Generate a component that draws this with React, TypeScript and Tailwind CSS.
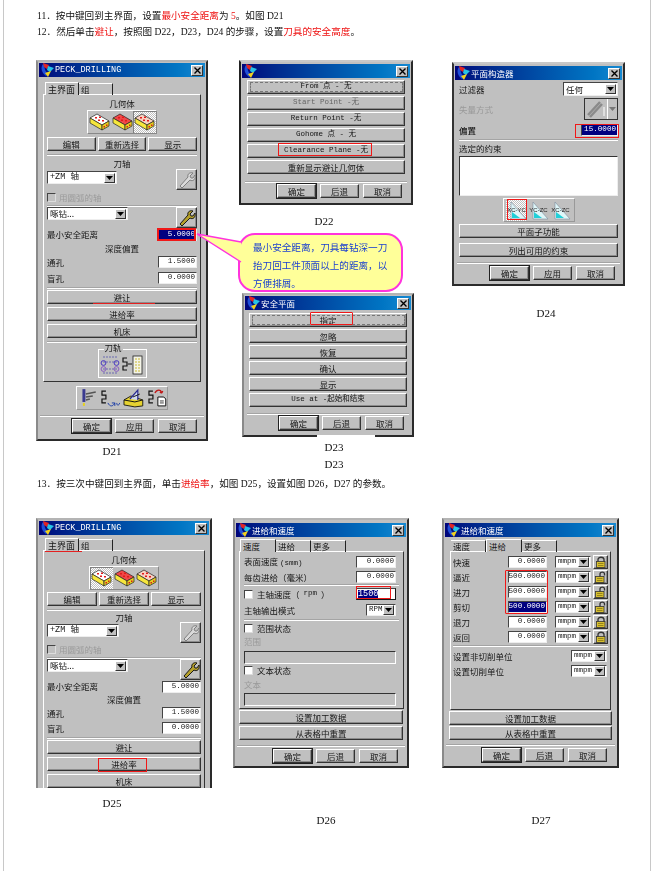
import React from 'react';

type P = { children?: React.ReactNode; className?: string };

const Logo = () => (
  <svg width="14" height="14" viewBox="0 0 14 14" className="shrink-0">
    <path d="M3 1C0 5 2 10 6 13L9 11C5 9 4 5 5 2Z" fill="#1f4fd8" />
    <path d="M3 0L9 2L7 6L4 4Z" fill="#e02424" />
    <path d="M8 3L14 5L10 9L7 7Z" fill="#28c4e8" />
    <path d="M5 10L11 8L8 14Z" fill="#f2d21e" />
  </svg>
);

const Title = ({ children, className = '' }: P) => (
  <div className={`flex h-[14px] items-center bg-linear-to-r from-[#00047c] to-[#1689d2] pl-[1px] pr-[2px] ${className}`}>
    <Logo />
    <span className="ml-[1px] flex-1 whitespace-nowrap text-[8.5px] leading-none text-white">{children}</span>
    <span className="flex h-[11px] w-[12px] items-center justify-center border border-t-white border-l-white border-r-[#333] border-b-[#333] bg-[#c0c0c0]">
      <svg width="7" height="7" viewBox="0 0 7 7"><path d="M0.5 0.5L6.5 6.5M6.5 0.5L0.5 6.5" stroke="#000" strokeWidth="1.4" /></svg>
    </span>
  </div>
);

const Btn = ({ children, className = '' }: P) => (
  <div className={`flex items-center justify-center whitespace-nowrap border border-t-white border-l-white border-r-[#333] border-b-[#333] bg-[#c0c0c0] leading-none shadow-[inset_-1px_-1px_0_#8c8c8c] ${className}`}>
    {children}
  </div>
);

const Sep = ({ className = '' }: P) => <div className={`h-[2px] border-t border-[#a4a4a4] bg-white ${className}`} />;

const Arrow = () => (
  <span className="ml-auto flex h-[10px] w-[11px] shrink-0 items-center justify-center border border-t-white border-l-white border-r-[#333] border-b-[#333] bg-[#c0c0c0]">
    <svg width="7" height="4" viewBox="0 0 7 4"><path d="M0 0H7L3.5 4Z" fill="#000" /></svg>
  </span>
);

const Select = ({ children, className = '' }: P) => (
  <div className={`flex items-center whitespace-nowrap border border-t-[#444] border-l-[#444] border-r-[#eee] border-b-[#eee] bg-white pl-[2px] pr-[1px] leading-none ${className}`}>
    <span>{children}</span>
    <Arrow />
  </div>
);

const Input = ({ children, className = '', sel }: P & { sel?: boolean }) => (
  <div className={`flex items-center justify-end border border-t-[#444] border-l-[#444] border-r-[#eee] border-b-[#eee] pr-[1px] font-['Liberation_Mono',monospace] text-[7.6px] leading-none ${sel ? 'bg-[#000080] text-white' : 'bg-white text-[#222]'} ${className}`}>
    {children}
  </div>
);

const Check = ({ className = '' }: P) => (
  <span className={`inline-block h-[9px] w-[9px] shrink-0 border border-t-[#444] border-l-[#444] border-r-[#ddd] border-b-[#ddd] ${className}`} />
);

const Tab = ({ children, active, className = '' }: P & { active?: boolean }) => (
  <div className={`flex h-[12px] items-center pl-[2px] leading-none ${active ? 'z-10 h-[13px] border border-b-0 border-t-white border-l-white border-r-[#222] bg-[#c0c0c0]' : 'mt-[1px] border-t border-r border-t-white border-r-[#222]'} ${className}`}>
    {children}
  </div>
);

const Mark = ({ className = '' }: P) => <div className={`pointer-events-none absolute z-20 border border-[#f01818] ${className}`} />;

const Frame = ({ children, className = '' }: P) => (
  <div className={`relative shrink-0 border-2 border-t-[#b4b4b4] border-l-[#8a8a8a] border-r-[#2a2a2a] border-b-[#2a2a2a] bg-[#c0c0c0] font-['Noto_Sans_CJK_SC',sans-serif] text-[8.5px] text-[#161616] ${className}`}>
    {children}
  </div>
);

const Footer = ({ labels, className = '', size = 'w-[39px]' }: { labels: string[]; className?: string; size?: string }) => (
  <div className={`flex justify-end gap-[4px] ${className}`}>
    {labels.map((l, i) => (
      <Btn key={l} className={`h-[14px] ${size} ${i === 0 ? 'outline outline-1 outline-[#222]' : ''}`}>{l}</Btn>
    ))}
  </div>
);

const Block = ({ top, on }: { top: string; on?: boolean }) => (
  <span className={`flex h-[22px] w-[23px] items-center justify-center ${on ? 'bg-[repeating-conic-gradient(#fff_0_25%,#c0c0c0_0_50%)] bg-[length:2px_2px] shadow-[inset_1px_1px_0_#808080]' : ''}`}>
    <svg width="21" height="18" viewBox="0 0 21 18">
      <path d="M1 5L8 1L20 8L13 12Z" fill={top} stroke="#222" strokeWidth="0.7" />
      <path d="M1 5L13 12V17L1 10Z" fill="#f6e63c" stroke="#222" strokeWidth="0.7" />
      <path d="M13 12L20 8V13L13 17Z" fill="#e8d020" stroke="#222" strokeWidth="0.7" />
      <path d="M6 4h2v1.5H6zM10 3.5h2V5h-2zM9 6.5h2V8H9zM13 7h2v1.5h-2z" fill="#e21a1a" />
      <path d="M14.5 13h1.5v1.5h-1.5zM17 11.5h1.5V13H17z" fill="#d02020" />
    </svg>
  </span>
);

const Wrench = ({ on }: { on?: boolean }) => (
  <Btn className="h-[21px] w-[21px]">
    <svg width="18" height="18" viewBox="0 0 18 18">
      <path d="M2 15L10 6C9 3 12 1 15 2L12 5L13 7L15 7L17 4C18 8 15 11 12 9L4 17Z" fill={on ? '#b5a02a' : '#dadada'} stroke={on ? '#1a1a1a' : '#808080'} strokeWidth="1" />
    </svg>
  </Btn>
);

const Chain = ({ x = 0 }: { x?: number }) => (
  <path d={`M${x + 5} 3H${x + 1}V7H${x + 5}V11H${x + 1}V15H${x + 5}`} fill="none" stroke="#111" strokeWidth="1.2" />
);

const PathA = () => (
  <svg width="20" height="20" viewBox="0 0 20 20">
    <path d="M3 2H17M3 7H17M3 14H17M3 18H17" stroke="#6a6ab0" strokeWidth="1" strokeDasharray="2 1" />
    <circle cx="3.5" cy="8" r="2.4" fill="none" stroke="#4a3ac0" /><circle cx="16.5" cy="8" r="2.4" fill="none" stroke="#4a3ac0" />
    <circle cx="3.5" cy="14" r="2.4" fill="none" stroke="#8a60c0" /><circle cx="16.5" cy="14" r="2.4" fill="none" stroke="#8a60c0" />
  </svg>
);
const PathB = () => (
  <svg width="22" height="20" viewBox="0 0 22 20">
    <Chain /><path d="M6 9H10" stroke="#111" />
    <rect x="11" y="1" width="9" height="18" fill="#f4f4e8" stroke="#222" strokeWidth="0.8" />
    <path d="M13 4h5M13 7h5M13 10h5M13 13h5M13 16h5" stroke="#c8b830" strokeDasharray="2 1" />
  </svg>
);
const ToolA = () => (
  <svg width="20" height="20" viewBox="0 0 20 20">
    <path d="M7 1V14" stroke="#3a3a90" strokeWidth="3" />
    <path d="M9 6L19 4M9 9L16 8M9 12L13 11" stroke="#555" strokeWidth="1.6" />
    <path d="M7 15V18" stroke="#e6d020" strokeWidth="2" />
  </svg>
);
const ToolB = () => (
  <svg width="20" height="20" viewBox="0 0 20 20">
    <Chain x={1} />
    <path d="M8 15C10 19 13 19 15 15M15 15V18M15 15H12M17 15C17 18 19 18 20 15" fill="none" stroke="#2040a8" />
  </svg>
);
const ToolC = () => (
  <svg width="22" height="20" viewBox="0 0 22 20">
    <path d="M1 12L8 8L20 12V18L12 19L1 17Z" fill="#e6d230" stroke="#111" strokeWidth="0.9" />
    <path d="M1 12L12 14L20 12" fill="none" stroke="#111" />
    <path d="M7 11L15 2V12" fill="#cfd8f0" stroke="#2a2a90" strokeWidth="1.2" />
    <path d="M10 9L17 6" stroke="#1a1a1a" />
  </svg>
);
const ToolD = () => (
  <svg width="20" height="20" viewBox="0 0 20 20">
    <Chain x={1} />
    <path d="M8 5C10 1 14 1 15 5M15 5L13 4M15 5L16 3" fill="none" stroke="#c01818" strokeWidth="1.3" />
    <path d="M11 9H17L19 11V18H11Z" fill="#fff" stroke="#111" />
    <path d="M13 13h4M13 15h4" stroke="#111" strokeWidth="0.8" />
  </svg>
);
const LockIcon = ({ open }: { open?: boolean }) => (
  <svg width="12" height="12" viewBox="0 0 12 12">
    {open
      ? <path d="M5 6V3C5 0.5 9.5 0.5 9.5 3V4.5" fill="none" stroke="#333" strokeWidth="1.3" />
      : <path d="M3 6V3.5C3 0.5 9 0.5 9 3.5V6" fill="none" stroke="#333" strokeWidth="1.3" />}
    <rect x={open ? 0.5 : 1.5} y="5.5" width="8.5" height="6" fill="#d8c030" stroke="#333" strokeWidth="0.8" />
    <path d={open ? 'M2 7.5h5.5M2 9.5h5.5' : 'M3 7.5h5.5M3 9.5h5.5'} stroke="#7a6a10" strokeWidth="0.7" />
  </svg>
);
const Plane = ({ label, on }: { label: string; on?: boolean }) => (
  <span className={`flex h-[21px] w-[21px] items-center justify-center ${on ? 'bg-[repeating-conic-gradient(#fff_0_25%,#c0c0c0_0_50%)] bg-[length:2px_2px]' : ''}`}>
    <svg width="21" height="21" viewBox="0 0 21 21">
      <path d="M5 2V19H20Z" fill="#dff6f8" stroke="#7a8a9a" strokeWidth="0.6" />
      <path d="M6 12L14 18H6Z" fill="#20d0d8" />
      <text x="10.5" y="12" textAnchor="middle" fontSize="6" fontFamily="Liberation Sans" fill="#222">{label}</text>
    </svg>
  </span>
);

const Row = ({ children, className = '' }: P) => <div className={`flex items-center justify-between ${className}`}>{children}</div>;

const Peck = ({ c }: { c?: boolean }) => (
  <Frame className={c ? 'h-[270px] w-[176px] overflow-hidden border-b-0' : 'h-[381px] w-[172px]'}>
    <Title className="mx-[1px] mt-[1px] font-['Liberation_Mono','Noto_Sans_CJK_SC',monospace]">PECK_DRILLING</Title>
    <div className={`ml-[7px] flex ${c ? 'mt-[3px]' : 'mt-[5px]'}`}>
      <Tab active className="w-[34px] text-[9px]">主界面</Tab>
      <Tab className="w-[34px]">组</Tab>
    </div>
    <div className={`-mt-px ml-[5px] border border-t-white border-l-white border-r-[#333] border-b-[#333] px-[3px] pt-[1px] pb-[3px] ${c ? 'w-[162px]' : 'w-[158px]'}`}>
      <div className="flex h-[14px] items-center justify-center">几何体</div>
      <div className="mx-auto flex h-[24px] w-[70px] items-center justify-center border border-t-white border-l-white border-r-[#888] border-b-[#888]">
        <Block top="#ffffff" on={c} />
        <Block top="#f04848" />
        <Block top="#f8d0c0" on={!c} />
      </div>
      <div className={`grid grid-cols-3 gap-[2px] ${c ? 'mt-[2px]' : 'mt-[3px]'}`}>
        <Btn className="h-[14px]">编辑</Btn>
        <Btn className="h-[14px]">重新选择</Btn>
        <Btn className="h-[14px]">显示</Btn>
      </div>
      <Sep className="mt-[3px]" />
      <div className={`flex items-center justify-center ${c ? 'h-[12px]' : 'h-[14px]'}`}>刀轴</div>
      <div className="-mt-px flex h-[21px] justify-between">
        <Select className={`mt-[2px] h-[13px] font-['Liberation_Mono','Noto_Sans_CJK_SC',monospace] ${c ? 'w-[72px]' : 'w-[70px]'}`}>+ZM 轴</Select>
        <Wrench />
      </div>
      <div className={`flex items-center gap-[3px] text-[#9a9a9a] ${c ? 'h-[13px]' : 'h-[14px]'}`}>
        <Check />
        <span>用圆弧的轴</span>
      </div>
      <Sep className="mt-[1px]" />
      <div className="flex h-[21px] justify-between">
        <Select className="h-[13px] w-[81px]">啄钻...</Select>
        <Wrench on />
      </div>
      <Row className="h-[13px]">
        <span>最小安全距离</span>
        {c
          ? <Input className="h-[12px] w-[39px]">5.0000</Input>
          : <Input sel className="h-[13px] w-[39px]">5.0000</Input>}
      </Row>
      <div className={`flex items-center justify-center ${c ? 'h-[13px]' : 'h-[14px]'}`}>深度偏置</div>
      <Row className="mt-[1px] h-[12px]">
        <span>通孔</span>
        <Input className="h-[12px] w-[39px]">1.5000</Input>
      </Row>
      <Row className={`h-[12px] ${c ? 'mt-[3px]' : 'mt-[4px]'}`}>
        <span>盲孔</span>
        <Input className="h-[12px] w-[39px]">0.0000</Input>
      </Row>
      <Sep className="mt-[3px]" />
      <div className="mt-[1px] flex flex-col gap-[3px]">
        <Btn className="h-[14px]">避让</Btn>
        <Btn className="h-[14px]">进给率</Btn>
        <Btn className="h-[14px]">机床</Btn>
      </div>
      {!c && (
        <>
          <Sep className="mt-[3px]" />
          <div className="relative mx-auto mt-[6px] flex h-[29px] w-[49px] items-end justify-center gap-[2px] border border-t-white border-l-white border-r-white border-b-white pb-[2px]">
            <span className="absolute -top-[7px] left-[5px] bg-[#c0c0c0] px-[1px] leading-none">刀轨</span>
            <PathA />
            <PathB />
          </div>
        </>
      )}
    </div>
    {!c && (
      <>
        <div className="mx-auto mt-[4px] flex h-[24px] w-[92px] items-center justify-center gap-[3px] border border-t-white border-l-white border-r-[#999] border-b-[#999]">
          <ToolA /><ToolB /><ToolC /><ToolD />
        </div>
        <Sep className="mx-[2px] mt-[5px]" />
        <Footer labels={['确定', '应用', '取消']} className="mt-[2px] pr-[9px]" />
      </>
    )}
    {!c && (
      <>
        <Mark className="left-[119px] top-[166px] h-[13px] w-[39px] border-2" />
        <div className="absolute left-[55px] top-[241px] h-[1px] w-[62px] bg-[#e42020]" />
      </>
    )}
    {c && (
      <>
        <div className="absolute left-[7px] top-[31px] h-[1px] w-[37px] bg-[#e42020]" />
        <Mark className="left-[60px] top-[238px] h-[14px] w-[49px]" />
      </>
    )}
  </Frame>
);

const mono = "font-['Liberation_Mono','Noto_Sans_CJK_SC',monospace] text-[7.5px]";

const D22 = () => (
  <Frame className="h-[145px] w-[174px] border-l-[#222] border-t-[#c8c8c8]">
    <Title className="mx-[1px] mt-[2px]"> </Title>
    <div className="mx-[6px] mt-[2px] flex flex-col gap-[2px]">
      <Btn className={`h-[14px] ${mono}`}>
        <span className="flex h-[10px] w-[153px] items-center justify-center border border-dashed border-[#777]">From 点 - 无</span>
      </Btn>
      <Btn className={`h-[14px] text-[#666] ${mono}`}>Start Point -无</Btn>
      <Btn className={`h-[14px] ${mono}`}>Return Point -无</Btn>
      <Btn className={`h-[14px] ${mono}`}>Gohome 点 - 无</Btn>
      <Btn className={`h-[14px] ${mono}`}>Clearance Plane -无</Btn>
      <Btn className="h-[14px]">重新显示避让几何体</Btn>
    </div>
    <Sep className="mx-[4px] mt-[7px]" />
    <Footer labels={['确定', '后退', '取消']} className="mt-[1px] pr-[9px]" />
    <Mark className="left-[37px] top-[81px] h-[13px] w-[94px]" />
  </Frame>
);

const D23 = () => (
  <Frame className="h-[144px] w-[172px]">
    <Title className="mx-[1px] mt-[1px]">安全平面</Title>
    <div className="mx-[5px] mt-[3px] flex flex-col gap-[2px]">
      <Btn className="h-[14px]">
        <span className="flex h-[10px] w-[153px] items-center justify-center border border-dashed border-[#777]">指定</span>
      </Btn>
      <Btn className="h-[14px]">忽略</Btn>
      <Btn className="h-[14px]">恢复</Btn>
      <Btn className="h-[14px]">确认</Btn>
      <Btn className="h-[14px]">显示</Btn>
      <Btn className={`h-[14px] ${mono}`}>Use at -起始和结束</Btn>
    </div>
    <Sep className="mx-[3px] mt-[6px]" />
    <Footer labels={['确定', '后退', '取消']} className="mt-[1px] pr-[8px]" />
    <Mark className="left-[66px] top-[17px] h-[13px] w-[43px] rounded-[1px]" />
    <div className="absolute -bottom-[2px] left-[73px] h-[2px] w-[58px] bg-white" />
  </Frame>
);

const D24 = () => (
  <Frame className="h-[224px] w-[173px] border-t-[#c8c8c8] border-l-[#333]">
    <Title className="mx-[1px] mt-[2px]">平面构造器</Title>
    <div className="mx-[5px]">
      <Row className="mt-[2px] h-[14px]">
        <span>过滤器</span>
        <Select className="h-[14px] w-[55px]">任何</Select>
      </Row>
      <Row className="mt-[2px] h-[22px]">
        <span className="text-[#999]">失量方式</span>
        <span className="flex h-[22px] w-[34px] border border-[#333]">
          <svg width="22" height="20" viewBox="0 0 22 20"><path d="M3 16L15 3M5 18L17 5" stroke="#8a8a8a" strokeWidth="2.5" /><path d="M19 8V17" stroke="#fff" /></svg>
          <span className="flex flex-1 items-center justify-center border-l border-white"><svg width="7" height="4" viewBox="0 0 7 4"><path d="M0 0H7L3.5 4Z" fill="#777" /></svg></span>
        </span>
      </Row>
      <Row className="mt-[4px] h-[12px]">
        <span className="font-medium">偏置</span>
        <Input sel className="h-[12px] w-[37px]">15.0000</Input>
      </Row>
      <Sep className="mt-[3px]" />
      <div className="flex h-[14px] items-center">选定的约束</div>
      <div className="mt-[1px] h-[40px] border border-t-[#333] border-l-[#333] border-r-[#eee] border-b-[#eee] bg-white" />
      <div className="mx-auto mt-[2px] flex h-[24px] w-[72px] items-center justify-center gap-[1px] border border-t-white border-l-white border-r-[#999] border-b-[#999]">
        <Plane label="XC-YC" on />
        <Plane label="YC-ZC" />
        <Plane label="XC-ZC" />
      </div>
      <div className="mt-[2px] flex flex-col gap-[5px]">
        <Btn className="h-[14px] border-t-[#eee] border-l-[#333]">平面子功能</Btn>
        <Btn className="h-[14px] border-t-[#eee] border-l-[#333]">列出可用的约束</Btn>
      </div>
    </div>
    <Sep className="mx-[3px] mt-[5px]" />
    <Footer labels={['确定', '应用', '取消']} className="mt-[2px] pr-[8px]" />
    <Mark className="left-[121px] top-[60px] h-[14px] w-[44px]" />
    <Mark className="left-[53px] top-[135px] h-[21px] w-[20px]" />
  </Frame>
);

const D26 = () => (
  <Frame className="h-[250px] w-[176px]">
    <Title className="mx-[1px] mt-[3px]">进给和速度</Title>
    <div className="ml-[5px] mt-[2px] flex">
      <Tab active className="w-[36px]">速度</Tab>
      <Tab className="w-[35px]">进给</Tab>
      <Tab className="w-[35px]">更多</Tab>
    </div>
    <div className="-mt-px ml-[4px] h-[158px] w-[165px] border border-t-white border-l-white border-r-[#333] border-b-[#333] px-[4px] pt-[4px]">
      <Row className="h-[12px] pr-[3px]">
        <span>表面速度 <span className={mono}>(smm)</span></span>
        <Input className="h-[12px] w-[40px]">0.0000</Input>
      </Row>
      <Row className="mt-[3px] h-[12px] pr-[3px]">
        <span>每齿进给（毫米）</span>
        <Input className="h-[12px] w-[40px]">0.0000</Input>
      </Row>
      <Sep className="mt-[1px]" />
      <Row className="mt-[1px] h-[14px] pr-[3px]">
        <span className="flex items-center gap-[4px]"><Check className="bg-white" />主轴速度（<span className={mono}>rpm</span>）</span>
        <span className="flex h-[12px] w-[40px] items-center border border-t-[#444] border-l-[#444] bg-white pl-[1px] font-['Liberation_Mono',monospace] text-[8.5px] leading-none"><span className="bg-[#000080] text-white">1500</span></span>
      </Row>
      <Row className="mt-[2px] h-[14px] pr-[3px]">
        <span>主轴输出模式</span>
        <Select className={`h-[12px] w-[30px] ${mono}`}>RPM</Select>
      </Row>
      <Sep className="mt-[2px]" />
      <div className="mt-[1px] flex h-[13px] items-center gap-[4px]"><Check className="bg-white" />范围状态</div>
      <div className="flex h-[13px] items-center text-[#999]">范围</div>
      <div className="mt-[3px] mr-[3px] h-[13px] border border-t-[#333] border-l-[#333] border-r-white border-b-white" />
      <div className="flex h-[13px] items-center gap-[4px]"><Check className="bg-white" />文本状态</div>
      <div className="mt-[1px] flex h-[13px] items-center text-[#999]">文本</div>
      <div className="mt-[2px] mr-[3px] h-[13px] border border-t-[#333] border-l-[#333] border-r-white border-b-white" />
    </div>
    <div className="mx-[4px] mt-[1px] flex flex-col gap-[2px]">
      <Btn className="h-[14px] border-l-[#444]">设置加工数据</Btn>
      <Btn className="h-[14px] border-l-[#444]">从表格中重置</Btn>
    </div>
    <Sep className="mx-[2px] mt-[5px]" />
    <Footer labels={['确定', '后退', '取消']} className="mt-[2px] pr-[9px]" />
    <div className="absolute left-[5px] top-[30px] h-[1px] w-[35px] bg-[#e42020]" />
    <Mark className="left-[121px] top-[66px] h-[13px] w-[35px]" />
  </Frame>
);

const feeds = [
  { l: '快速', v: '0.0000' },
  { l: '逼近', v: '500.0000', open: true },
  { l: '进刀', v: '500.0000', open: true },
  { l: '剪切', v: '500.0000', open: true, sel: true },
  { l: '退刀', v: '0.0000' },
  { l: '返回', v: '0.0000' },
];

const D27 = () => (
  <Frame className="h-[250px] w-[177px]">
    <Title className="mx-[1px] mt-[3px]">进给和速度</Title>
    <div className="ml-[7px] mt-[2px] flex">
      <Tab className="w-[35px]">速度</Tab>
      <Tab active className="w-[36px]">进给</Tab>
      <Tab className="w-[35px]">更多</Tab>
    </div>
    <div className="-mt-px ml-[6px] h-[159px] w-[161px] border border-t-white border-l-white border-r-[#333] border-b-[#333] px-[2px] pt-[3px]">
      <div className="flex flex-col gap-[1px]">
        {feeds.map((f) => (
          <div key={f.l} className="flex h-[14px] items-center">
            <span className="w-[55px]">{f.l}</span>
            <Input sel={f.sel} className="h-[12px] w-[39px]">{f.v}</Input>
            <Select className={`ml-[8px] h-[12px] w-[36px] ${mono}`}>mmpm</Select>
            <Btn className="ml-[2px] h-[14px] w-[15px]"><LockIcon open={f.open} /></Btn>
          </div>
        ))}
      </div>
      <Sep className="mt-[1px]" />
      <Row className="mt-[3px] h-[12px] pr-[1px]">
        <span>设置非切削单位</span>
        <Select className={`h-[12px] w-[36px] ${mono}`}>mmpm</Select>
      </Row>
      <Row className="mt-[3px] h-[12px] pr-[1px]">
        <span>设置切削单位</span>
        <Select className={`h-[12px] w-[36px] ${mono}`}>mmpm</Select>
      </Row>
    </div>
    <div className="mx-[5px] mt-[1px] flex flex-col gap-[1px]">
      <Btn className="h-[14px] border-l-[#444]">设置加工数据</Btn>
      <Btn className="h-[14px] border-l-[#444]">从表格中重置</Btn>
    </div>
    <Sep className="mx-[2px] mt-[4px]" />
    <Footer labels={['确定', '后退', '取消']} className="mt-[2px] pr-[10px]" />
    <div className="absolute left-[43px] top-[30px] h-[1px] w-[35px] bg-[#e42020]" />
    <Mark className="left-[61px] top-[50px] h-[44px] w-[43px] rounded-[1px]" />
  </Frame>
);

const Cap = ({ children, className = '' }: P) => (
  <div className={`h-[16px] text-center font-['Liberation_Serif',serif] text-[11px] leading-[16px] text-[#111] ${className}`}>{children}</div>
);

const Callout = () => (
  <div className="relative z-30 -ml-[1px] h-[59px] w-[165px] shrink-0 rounded-[17px] border-2 border-[#ff33dd] bg-[#ffff99] px-[13px] font-['Noto_Sans_CJK_SC',sans-serif] text-[9.6px] leading-[18px] text-[#1a3fd0]">
    <div className="pt-[3px]">最小安全距离，刀具每钻深一刀<br />抬刀回工件顶面以上的距离，以<br />方便排屑。</div>
    <svg className="absolute -left-[43px] -top-[3px] overflow-visible" width="48" height="36" viewBox="0 0 48 36">
      <path d="M0 2L44 10L44 30Z" fill="#ffff99" />
      <path d="M44 10L0 2L44 30" fill="none" stroke="#ff33dd" strokeWidth="1.4" />
    </svg>
  </div>
);

const Red = ({ children }: P) => <span className="text-[#ee1111]">{children}</span>;

const docLine = "ml-[1px] h-[16px] whitespace-nowrap font-['Liberation_Serif','Noto_Sans_CJK_SC',serif] text-[9.6px] leading-[16px] text-[#111]";

export default function App() {
  return (
    <div className="h-[871px] w-[654px] overflow-hidden bg-white">
      <div className="ml-[3px] h-[871px] w-[648px] border-x border-[#c8c8c8] pl-[32px] pt-[8px] blur-[0.4px]">
        <p className={docLine}>11．按中键回到主界面，设置<Red>最小安全距离</Red>为 <Red>5</Red>。如图 D21</p>
        <p className={docLine}>12．然后单击<Red>避让</Red>，按照图 D22，D23，D24 的步骤，设置<Red>刀具的安全高度</Red>。</p>
        <div className="mt-[20px] flex h-[416px] items-start">
          <div className="w-[172px] shrink-0">
            <Peck />
            <Cap className="mt-[2px] w-[152px]">D21</Cap>
          </div>
          <div className="ml-[31px] w-[174px] shrink-0">
            <D22 />
            <Cap className="mt-[8px] w-[170px]">D22</Cap>
            <div className="mt-[4px]"><Callout /></div>
            <div className="ml-[3px] mt-[1px]"><D23 /></div>
            <Cap className="mt-[2px] w-[190px]">D23</Cap>
            <Cap className="mt-[1px] w-[190px]">D23</Cap>
          </div>
          <div className="ml-[39px] w-[188px] shrink-0 pt-[2px]">
            <D24 />
            <Cap className="mt-[19px]">D24</Cap>
          </div>
        </div>
        <p className={docLine}>13．按三次中键回到主界面，单击<Red>进给率</Red>，如图 D25，设置如图 D26，D27 的参数。</p>
        <div className="mt-[26px] flex items-start">
          <div className="w-[176px] shrink-0">
            <Peck c />
            <Cap className="mt-[7px] w-[152px]">D25</Cap>
          </div>
          <div className="ml-[21px] w-[176px] shrink-0">
            <D26 />
            <Cap className="mt-[44px] w-[186px]">D26</Cap>
          </div>
          <div className="ml-[33px] w-[198px] shrink-0">
            <D27 />
            <Cap className="mt-[44px]">D27</Cap>
          </div>
        </div>
      </div>
    </div>
  );
}
